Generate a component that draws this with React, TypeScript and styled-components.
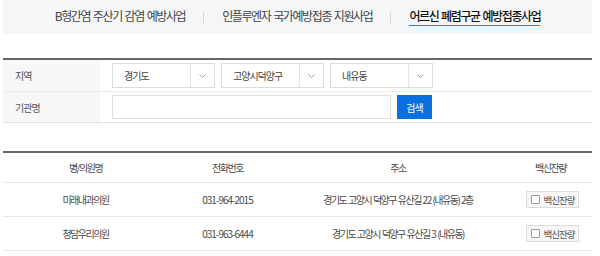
import styled, { createGlobalStyle } from "styled-components";

const GlobalStyle = createGlobalStyle`
  body {
    margin: 0;
    background: #fff;
    font-family: "Noto Sans CJK KR", "Noto Sans", sans-serif;
    color: #444;
  }
`;

const Page = styled.div`
  width: 589px;
  padding-left: 3px;
`;

const TabBar = styled.nav`
  height: 34px;
  background: #f5f6f8;
  display: flex;
  align-items: center;
  justify-content: center;
  gap: 18px;
`;

const Tab = styled.a<{ $active?: boolean }>`
  font-size: 12px;
  letter-spacing: -1.4px;
  word-spacing: 1.5px;
  color: ${(p) => (p.$active ? "#111" : "#444")};
  font-weight: ${(p) => (p.$active ? 500 : 400)};
  text-decoration: none;
  padding-bottom: 1px;
  border-bottom: 1px solid ${(p) => (p.$active ? "#1e88e5" : "transparent")};
  line-height: 16px;
`;

const TabDivider = styled.span`
  width: 1px;
  height: 11px;
  background: #d4d6da;
`;

const SearchTable = styled.div`
  margin-top: 24px;
  border-top: 2px solid #666;
  border-bottom: 1px solid #e2e2e2;
`;

const SearchRow = styled.div`
  display: grid;
  grid-template-columns: 97px 1fr;
  & + & {
    border-top: 1px solid #ececec;
  }
`;

const Label = styled.div`
  background: #f7f7f7;
  padding-left: 12px;
  display: flex;
  align-items: center;
  font-size: 10px;
  letter-spacing: -1px;
  color: #555;
`;

const Field = styled.div`
  display: flex;
  gap: 6px;
  padding: 3px 0 3px 12px;
`;

const Select = styled.div`
  width: 103px;
  height: 25px;
  box-sizing: border-box;
  border: 1px solid #dcdcdc;
  display: flex;
  align-items: center;
  font-size: 10px;
  letter-spacing: -1px;
  color: #444;
`;

const SelectText = styled.span`
  flex: 1;
  padding-left: 11px;
`;

const Arrow = styled.span`
  width: 23px;
  height: 100%;
  border-left: 1px solid #e4e4e4;
  display: flex;
  align-items: center;
  justify-content: center;
`;

const TextInput = styled.input`
  width: 279px;
  height: 24px;
  box-sizing: border-box;
  border: 1px solid #e0e0e0;
  outline: none;
  margin: 0;
`;

const SearchButton = styled.button`
  width: 35px;
  height: 24px;
  border: 0;
  background: #0a70e0;
  color: #fff;
  font-family: inherit;
  font-size: 10px;
  letter-spacing: -1px;
  padding: 0;
`;

const cols = "165px 119px 222px 83px";

const ResultTable = styled.div`
  margin-top: 28px;
  border-top: 2px solid #666;
`;

const Row = styled.div<{ $head?: boolean }>`
  display: grid;
  grid-template-columns: ${cols};
  height: ${(p) => (p.$head ? "29px" : "33px")};
  border-bottom: 1px solid #e6e6e6;
  align-items: center;
`;

const Cell = styled.div<{ $numeric?: boolean }>`
  text-align: center;
  font-size: 10px;
  letter-spacing: ${(p) => (p.$numeric ? "-1px" : "-1.5px")};
  word-spacing: 1px;
  color: #4a4a4a;
  white-space: nowrap;
`;

const StockButton = styled.button`
  height: 17px;
  width: 53px;
  box-sizing: border-box;
  border: 1px solid #dcdcdc;
  background: #f7f7f7;
  font-family: inherit;
  font-size: 9.5px;
  letter-spacing: -1px;
  color: #555;
  display: inline-flex;
  align-items: center;
  justify-content: center;
  gap: 4px;
  padding: 0;
  margin-left: 4px;
`;

const Box = styled.span`
  width: 7px;
  height: 7px;
  border: 1px solid #9a9a9a;
  border-radius: 1px;
  background: #fff;
`;

const Chevron = () => (
  <svg width="7" height="4" viewBox="0 0 7 4">
    <path d="M0.5 0.5 L3.5 3.5 L6.5 0.5" fill="none" stroke="#888" strokeWidth="0.8" />
  </svg>
);

const clinics = [
  { name: "미래내과의원", tel: "031-964-2015", addr: "경기도 고양시 덕양구 유산길 22 (내유동) 2층" },
  { name: "청담우리의원", tel: "031-963-6444", addr: "경기도 고양시 덕양구 유산길 3 (내유동)" },
];

export default function App() {
  return (
    <Page>
      <GlobalStyle />
      <TabBar>
        <Tab>B형간염 주산기 감염 예방사업</Tab>
        <TabDivider />
        <Tab>인플루엔자 국가예방접종 지원사업</Tab>
        <TabDivider />
        <Tab $active>어르신 폐렴구균 예방접종사업</Tab>
      </TabBar>

      <SearchTable>
        <SearchRow>
          <Label>지역</Label>
          <Field>
            {["경기도", "고양시덕양구", "내유동"].map((v) => (
              <Select key={v}>
                <SelectText>{v}</SelectText>
                <Arrow>
                  <Chevron />
                </Arrow>
              </Select>
            ))}
          </Field>
        </SearchRow>
        <SearchRow>
          <Label>기관명</Label>
          <Field>
            <TextInput />
            <SearchButton>검색</SearchButton>
          </Field>
        </SearchRow>
      </SearchTable>

      <ResultTable>
        <Row $head>
          <Cell>병/의원명</Cell>
          <Cell>전화번호</Cell>
          <Cell>주소</Cell>
          <Cell>백신잔량</Cell>
        </Row>
        {clinics.map((c) => (
          <Row key={c.name}>
            <Cell>{c.name}</Cell>
            <Cell $numeric>{c.tel}</Cell>
            <Cell>{c.addr}</Cell>
            <Cell>
              <StockButton>
                <Box />
                백신잔량
              </StockButton>
            </Cell>
          </Row>
        ))}
      </ResultTable>
    </Page>
  );
}
